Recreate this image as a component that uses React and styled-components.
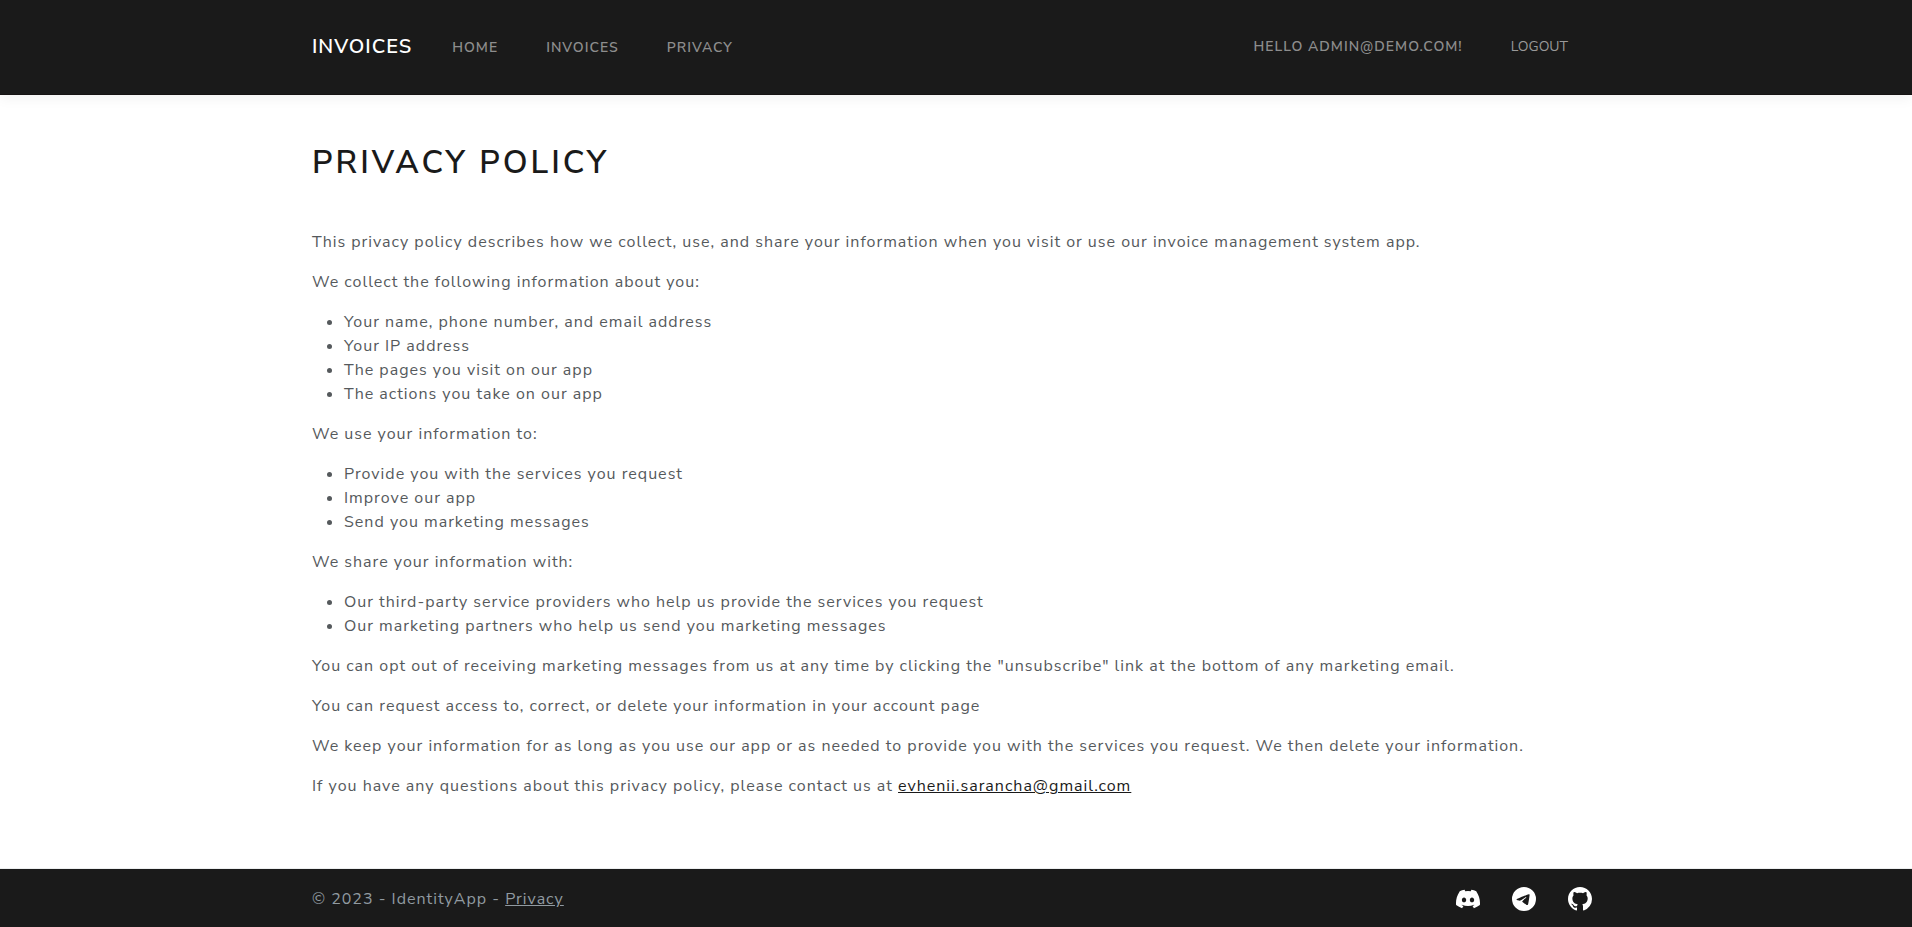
import React from "react";
import styled, { createGlobalStyle } from "styled-components";
import { BsDiscord, BsTelegram, BsGithub } from "react-icons/bs";

const GlobalStyle = createGlobalStyle`
  *, *::before, *::after { box-sizing: border-box; }
  body {
    margin: 0;
    background: #fff;
    color: #55595c;
    font-family: "Nunito Sans", Nunito, "Open Sans", sans-serif;
    font-size: 16px;
    font-weight: 400;
    line-height: 24px;
    letter-spacing: 1px;
  }
`;

const Page = styled.div`
  min-height: 100vh;
  display: flex;
  flex-direction: column;
`;

const Container = styled.div`
  width: 100%;
  max-width: 1320px;
  margin: 0 auto;
  padding: 0 16px;
`;

const Header = styled.header`
  padding: 24px 0;
  background: #1a1a1a;
  border-bottom: 1px solid #161313;
  box-shadow: 0 4px 12px rgba(0, 0, 0, 0.05);
`;

const Navbar = styled(Container).attrs({ as: "nav" })`
  display: flex;
  align-items: center;
  min-height: 46px;
  text-transform: uppercase;
`;

const Brand = styled.a`
  margin-right: 40px;
  color: #fff;
  font-size: 20px;
  font-weight: 600;
  text-decoration: none;
`;

const NavList = styled.ul`
  display: flex;
  gap: 48px;
  margin: 0;
  padding: 2px 0 0;
  list-style: none;
  font-size: 14px;
`;

const UserList = styled(NavList)`
  margin-left: auto;
  padding: 0 32px 0 0;
`;

const NavLink = styled.a`
  color: #8d8d8d;
  font-weight: 600;
  text-decoration: none;
`;

const LogoutButton = styled.button`
  padding: 0;
  border: 0;
  background: none;
  color: #999;
  font: inherit;
  font-weight: 400;
  letter-spacing: 0;
  text-transform: uppercase;
  cursor: pointer;
`;

const Main = styled(Container).attrs({ as: "main" })`
  flex: 1;
  padding-top: 48px;
  padding-bottom: 48px;
`;

const Title = styled.h1`
  margin: 0 0 48px;
  color: #1a1a1a;
  font-size: 32px;
  font-weight: 600;
  line-height: 39px;
  letter-spacing: 3px;
  text-transform: uppercase;
`;

const Paragraph = styled.p`
  margin: 0 0 16px;
`;

const List = styled.ul`
  margin: 0 0 16px;
  padding-left: 32px;
`;

const MailLink = styled.a`
  color: #1a1a1a;
`;

const Footer = styled.footer`
  background: #1a1a1a;
  border-top: 1px solid #eceeef;
  color: #919aa1;
`;

const FooterBar = styled(Container)`
  display: flex;
  align-items: center;
  justify-content: space-between;
  padding-top: 18px;
  padding-bottom: 16px;
`;

const FooterLink = styled.a`
  color: inherit;
`;

const Socials = styled.div`
  display: flex;
  gap: 32px;
  padding-right: 8px;
`;

const SocialLink = styled.a`
  display: flex;
  color: #fff;
  font-size: 24px;
`;

const collected = [
  "Your name, phone number, and email address",
  "Your IP address",
  "The pages you visit on our app",
  "The actions you take on our app",
];
const uses = [
  "Provide you with the services you request",
  "Improve our app",
  "Send you marketing messages",
];
const partners = [
  "Our third-party service providers who help us provide the services you request",
  "Our marketing partners who help us send you marketing messages",
];

const BulletList = ({ items }) => (
  <List>
    {items.map((item) => (
      <li key={item}>{item}</li>
    ))}
  </List>
);

export default function App() {
  return (
    <Page>
      <GlobalStyle />
      <Header>
        <Navbar>
          <Brand href="#">Invoices</Brand>
          <NavList>
            <li><NavLink href="#">Home</NavLink></li>
            <li><NavLink href="#">Invoices</NavLink></li>
            <li><NavLink href="#">Privacy</NavLink></li>
          </NavList>
          <UserList>
            <li><NavLink href="#">Hello admin@demo.com!</NavLink></li>
            <li><LogoutButton type="button">Logout</LogoutButton></li>
          </UserList>
        </Navbar>
      </Header>
      <Main>
        <Title>Privacy Policy</Title>
        <Paragraph>
          This privacy policy describes how we collect, use, and share your information when you
          visit or use our invoice management system app.
        </Paragraph>
        <Paragraph>We collect the following information about you:</Paragraph>
        <BulletList items={collected} />
        <Paragraph>We use your information to:</Paragraph>
        <BulletList items={uses} />
        <Paragraph>We share your information with:</Paragraph>
        <BulletList items={partners} />
        <Paragraph>
          You can opt out of receiving marketing messages from us at any time by clicking the
          "unsubscribe" link at the bottom of any marketing email.
        </Paragraph>
        <Paragraph>
          You can request access to, correct, or delete your information in your account page
        </Paragraph>
        <Paragraph>
          We keep your information for as long as you use our app or as needed to provide you with
          the services you request. We then delete your information.
        </Paragraph>
        <Paragraph>
          If you have any questions about this privacy policy, please contact us at{" "}
          <MailLink href="mailto:evhenii.sarancha@gmail.com">evhenii.sarancha@gmail.com</MailLink>
        </Paragraph>
      </Main>
      <Footer>
        <FooterBar>
          <span>
            © 2023 - IdentityApp - <FooterLink href="#">Privacy</FooterLink>
          </span>
          <Socials>
            <SocialLink href="#" aria-label="Discord"><BsDiscord /></SocialLink>
            <SocialLink href="#" aria-label="Telegram"><BsTelegram /></SocialLink>
            <SocialLink href="#" aria-label="GitHub"><BsGithub /></SocialLink>
          </Socials>
        </FooterBar>
      </Footer>
    </Page>
  );
}
